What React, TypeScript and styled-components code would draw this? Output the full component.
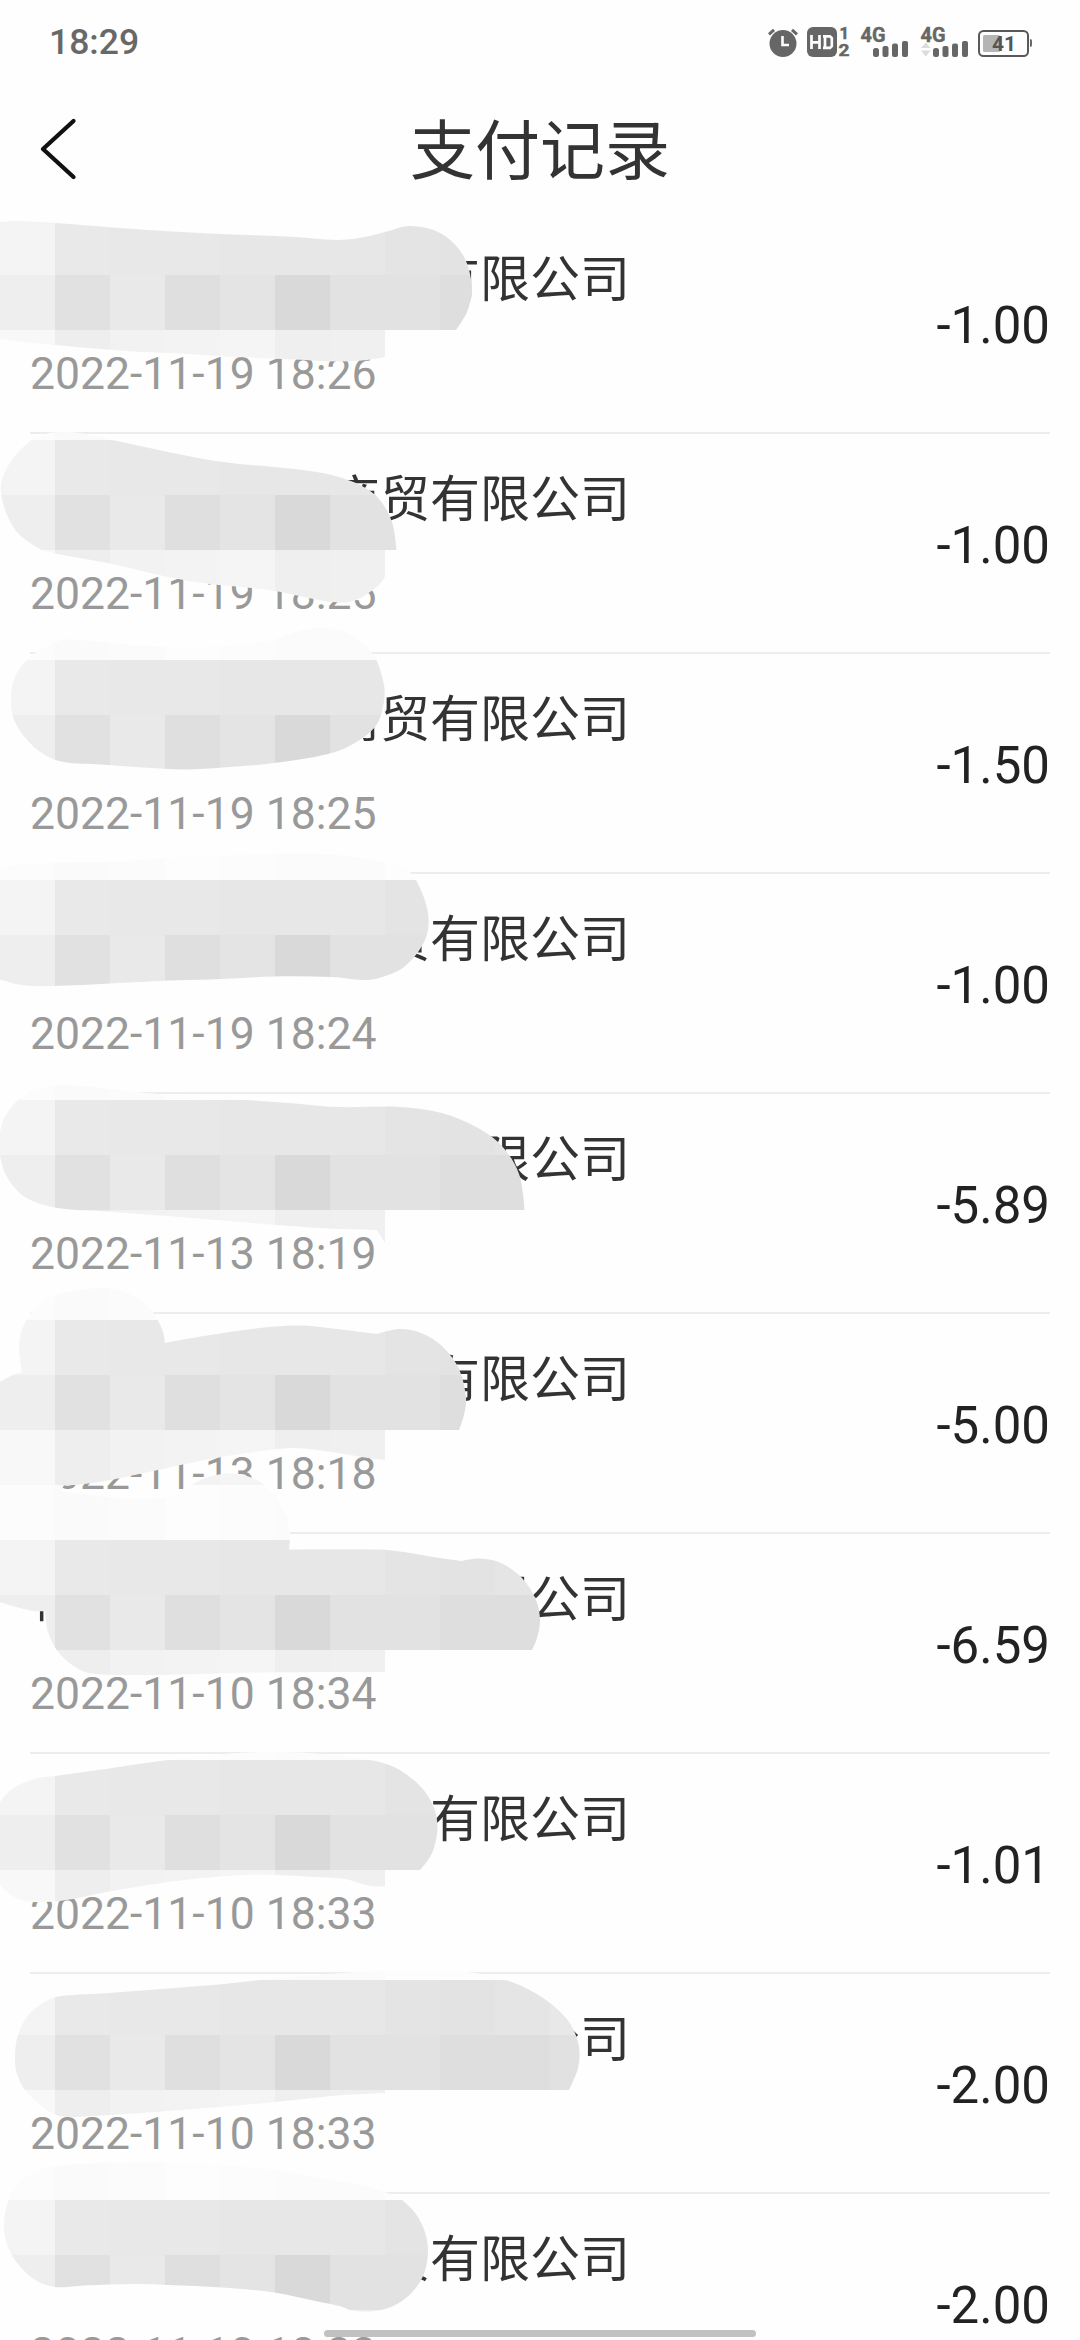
import React from 'react';
import styled, { createGlobalStyle } from 'styled-components';

const GlobalStyle = createGlobalStyle`
  html, body {
    margin: 0;
    padding: 0;
    background: #fefefe;
  }
  *, *::before, *::after { box-sizing: border-box; }
`;

const Screen = styled.div`
  position: relative;
  width: 1080px;
  height: 2340px;
  overflow: hidden;
  background: #fefefe;
  font-family: Roboto, 'Noto Sans CJK SC', sans-serif;
`;

const StatusBar = styled.header`
  display: flex;
  justify-content: space-between;
  height: 84px;
  padding: 0 46px 0 49px;
`;

const Clock = styled.span`
  font-size: 35.5px;
  font-weight: 500;
  line-height: 84px;
  color: #686868;
`;

const StatusIcons = styled.svg`
  width: 270px;
  height: 84px;
  font-family: Roboto, sans-serif;
`;

const TitleBar = styled.div`
  display: grid;
  grid-template-columns: 110px 1fr 110px;
  align-items: center;
  height: 130px;
`;

const BackButton = styled.button`
  display: flex;
  align-items: center;
  height: 130px;
  padding: 0 0 0 38px;
  border: 0;
  background: none;
`;

const Title = styled.h1`
  margin: 0;
  padding-bottom: 7px;
  font-family: 'Noto Sans CJK SC', sans-serif;
  font-size: 65px;
  font-weight: 400;
  line-height: 90px;
  text-align: center;
  color: #333;
`;

const List = styled.ul`
  margin: 0;
  padding: 0 30px;
  list-style: none;
`;

const Row = styled.li`
  display: flex;
  align-items: center;
  justify-content: space-between;
  height: 220px;
  border-bottom: 2px solid #ededed;
`;

const Details = styled.div`
  display: flex;
  flex-direction: column;
  gap: 42px;
  height: 218px;
  padding-top: 31px;
`;

const Company = styled.span`
  font-family: 'Noto Sans CJK SC', sans-serif;
  font-size: 50px;
  line-height: 60px;
  white-space: pre;
  color: #333;
`;

const Time = styled.time`
  font-size: 44.5px;
  line-height: 54px;
  color: #999;
`;

const Amount = styled.span`
  padding-top: 5px;
  font-size: 51px;
  line-height: 60px;
  color: #222;
`;

const SmearLayer = styled.svg`
  position: absolute;
  top: 0;
  left: 0;
  width: 605px;
  height: 2340px;
  pointer-events: none;
`;

const HomeIndicator = styled.div`
  position: absolute;
  left: 324px;
  bottom: 3px;
  width: 432px;
  height: 7px;
  border-radius: 4px;
  background: #c1c1c1;
`;

interface Payment {
  company: string;
  time: string;
  amount: string;
}

const NAME_LENGTH = 12;
const WIDE_SPACE = '\u3000';

const payments: Payment[] = [
  { company: '有限公司', time: '2022-11-19 18:26', amount: '-1.00' },
  { company: '商贸有限公司', time: '2022-11-19 18:25', amount: '-1.00' },
  { company: '商贸有限公司', time: '2022-11-19 18:25', amount: '-1.50' },
  { company: '贸有限公司', time: '2022-11-19 18:24', amount: '-1.00' },
  { company: '限公司', time: '2022-11-13 18:19', amount: '-5.89' },
  { company: '有限公司', time: '2022-11-13 18:18', amount: '-5.00' },
  { company: '杭' + WIDE_SPACE.repeat(8) + '限公司', time: '2022-11-10 18:34', amount: '-6.59' },
  { company: '有限公司', time: '2022-11-10 18:33', amount: '-1.01' },
  { company: '公司', time: '2022-11-10 18:33', amount: '-2.00' },
  { company: '贸有限公司', time: '2022-11-10 18:33', amount: '-2.00' },
];

/* Mosaic tile colours: four 55px bands that repeat every 220px. */
const CELL = 55;
const bands: string[][] = [
  ['#f4f4f4', '#e9e9e9', '#e8e8e8', '#e8e8e8', '#e7e7e7', '#e7e7e7', '#e7e7e7', '#e4e4e4', '#e3e3e3', '#e5e5e5', '#e8e8e8'],
  ['#eeeeee', '#e1e1e1', '#e9e9e9', '#dfdfdf', '#e4e4e4', '#d9d9d9', '#e2e2e2', '#e2e2e2', '#dedede', '#dedede', '#e1e1e1'],
  ['#f8f8f8', '#eeeeee', '#f2f2f2', '#f3f3f3', '#f5f5f5', '#efefef', '#f0f0f0', '#fefefe', '#fefefe', '#fefefe', '#fefefe'],
  ['#fcfcfc', '#fafafa', '#fbfbfb', '#fdfdfd', '#fcfcfc', '#fbfbfb', '#fbfbfb', '#fdfdfd', '#fdfdfd', '#fdfdfd', '#fdfdfd'],
];

/* [x, y] is a smooth point of the outline, [x, y, 1] a sharp corner. */
type Point = [number, number, number?];

const smears: Point[][] = [
  [[-10, 225], [0, 222], [20, 221], [63, 223.5], [126, 228.5], [210, 233.5], [295, 237], [337, 240], [362, 237.5], [387, 231.5], [410, 226], [440, 233], [463, 255], [472, 288], [467, 312], [456, 330, 1], [385, 330, 1], [385, 357, 1], [362, 360.5], [337, 361.5], [295, 359.5], [219, 356], [189, 354], [126, 351], [55, 345], [0, 339], [-10, 335]],
  [[1, 492], [8, 466], [31, 440], [45, 434], [63, 432], [80, 433], [110, 439.5], [168, 452], [223, 462], [295, 469], [332, 475], [362, 486], [379, 499], [392, 522], [396.5, 550, 1], [385, 550, 1], [385, 576], [370, 592], [351, 601.5], [332, 602], [311, 598.5], [269, 590], [210, 584], [168, 577], [110, 563.5], [55, 553.5], [38, 548], [14, 528]],
  [[11, 700], [15, 677], [29, 658], [55, 642], [72, 639.5], [109, 643], [168, 647], [219, 646], [269, 641], [303, 630], [324, 628], [345, 632], [372, 653], [384, 685], [383, 707], [375, 727], [353, 744], [328, 754], [274, 763], [223, 767.5], [185, 769.5], [135, 767], [101, 764.5], [59, 761], [34, 747], [15, 722]],
  [[-10, 870], [0, 868], [25, 864], [105, 862], [210, 856], [295, 854], [337, 855], [379, 861], [404, 868], [416, 880], [428, 913], [425, 940], [404, 967], [379, 978], [362, 980], [332, 977], [274, 976.5], [210, 979.5], [168, 980.5], [109, 983.5], [67, 985.5], [25, 985.5], [0, 979.5], [-10, 975]],
  [[0, 1133], [6, 1115], [21, 1098], [46, 1087], [67, 1085], [147, 1093], [246, 1100], [295, 1103.5], [337, 1107], [400, 1107], [442, 1113], [476, 1127], [501, 1145], [519, 1174], [524.5, 1210, 1], [385, 1210, 1], [385, 1243, 1], [377, 1230, 1], [337, 1229], [311, 1227.5], [252, 1223], [168, 1216], [105, 1211.5], [55, 1207.5], [25, 1197], [7, 1177], [0, 1155]],
  [[-10, 1390], [0, 1382], [13, 1375, 1], [22, 1372, 1], [19, 1347], [23, 1327], [34, 1309], [50, 1297], [80, 1290], [109, 1288], [130, 1294], [151, 1310], [162, 1329], [165, 1343, 1], [210, 1335], [269, 1327], [303, 1325.5], [337, 1329], [377, 1334, 1], [400, 1329], [421, 1333], [442, 1346], [459, 1369], [466, 1398], [464, 1415], [459, 1430, 1], [385, 1430, 1], [385, 1460, 1], [362, 1457], [332, 1452], [295, 1448], [269, 1450], [210, 1459], [139, 1474], [105, 1481], [80, 1484.5], [64, 1485.5, 1], [-10, 1485, 1]],
  [[-10, 1485, 1], [64, 1485, 1], [61, 1491, 1], [105, 1497], [143, 1499], [168, 1496], [191, 1485], [210, 1476.5], [231, 1473.5], [257, 1480], [274, 1495], [286, 1516], [290, 1534], [289, 1549.5, 1], [379, 1549.5], [404, 1552], [433, 1557], [461, 1561, 1], [480, 1558.5], [501, 1563], [522, 1578], [536, 1600], [540, 1620], [537, 1638], [532, 1650, 1], [385, 1650, 1], [385, 1672, 1], [252, 1672.5], [181, 1674.5], [101, 1674.5], [80, 1670], [59, 1653], [48, 1632], [45.5, 1611, 1], [33, 1611], [0, 1602], [-10, 1596]],
  [[-10, 1815], [0, 1802], [12, 1789], [34, 1779], [55, 1776], [109, 1768.5], [168, 1760], [231, 1753.5], [274, 1752], [316, 1753.5], [370, 1760], [396, 1768], [421, 1787], [434, 1808], [437.5, 1828], [434, 1848], [428, 1860], [420, 1870, 1], [385, 1870, 1], [385, 1886.5, 1], [370, 1886], [345, 1879], [307, 1876.5], [261, 1874.5], [219, 1876.5], [168, 1882], [109, 1891.5], [63, 1900.5], [25, 1901], [5, 1890], [-10, 1870]],
  [[15, 2057], [18, 2035], [30, 2013], [53, 1998], [74, 1995], [109, 1993], [168, 1988.5], [219, 1984.5], [261, 1980], [328, 1974], [379, 1971], [429, 1970], [476, 1973], [509, 1981], [535, 1993], [556, 2008], [571, 2025], [579, 2047], [578, 2068], [569, 2090, 1], [385, 2090, 1], [385, 2093, 1], [337, 2095.5], [295, 2100], [219, 2107], [168, 2111], [109, 2115], [63, 2116.5], [44, 2108], [25, 2090], [17, 2074]],
  [[4, 2227], [9, 2199], [25, 2178], [51, 2167], [105, 2163], [156, 2162], [219, 2165], [274, 2170], [316, 2177], [362, 2185], [387, 2193], [402, 2200], [418, 2217], [427, 2240], [427, 2262], [420, 2282], [402, 2301], [379, 2310.5], [354, 2311], [341, 2306.5], [320, 2302], [274, 2292.5], [223, 2287.5], [168, 2285], [135, 2284], [84, 2285.5], [55, 2287], [35, 2280], [18, 2264], [8, 2247]],
];

/* Closed Catmull-Rom curve through the points, with straight handles at corners. */
function outline(points: Point[]): string {
  const n = points.length;
  const handle = (i: number, sign: number): [number, number] => {
    const [x, y, sharp] = points[i];
    if (sharp) return [x, y];
    const prev = points[(i + n - 1) % n];
    const next = points[(i + 1) % n];
    const dx = next[0] - prev[0];
    const dy = next[1] - prev[1];
    const total = Math.hypot(dx, dy) || 1;
    const near = sign > 0 ? next : prev;
    const reach = Math.hypot(near[0] - x, near[1] - y) / 3;
    return [x + (sign * dx * reach) / total, y + (sign * dy * reach) / total];
  };
  let d = `M${points[0][0]} ${points[0][1]}`;
  for (let i = 0; i < n; i++) {
    const j = (i + 1) % n;
    const a = handle(i, 1);
    const b = handle(j, -1);
    d += `C${a[0]} ${a[1]} ${b[0]} ${b[1]} ${points[j][0]} ${points[j][1]}`;
  }
  return d + 'Z';
}

function Smears() {
  return (
    <SmearLayer viewBox="0 0 605 2340" aria-hidden="true">
      <defs>
        <pattern id="mosaic" width={605} height={220} patternUnits="userSpaceOnUse">
          {bands.map((band, r) =>
            band.map((fill, c) => (
              <rect key={`${r}-${c}`} x={c * CELL} y={r * CELL} width={CELL} height={CELL} fill={fill} shapeRendering="crispEdges" />
            )),
          )}
        </pattern>
      </defs>
      {smears.map((points, i) => (
        <path key={i} d={outline(points)} fill="url(#mosaic)" />
      ))}
    </SmearLayer>
  );
}

function Signal({ x, idle }: { x: number; idle?: boolean }) {
  return (
    <g transform={`translate(${x} 0)`}>
      <text x="-0.5" y="41.5" fontSize="20" fontWeight="700" stroke="#666" strokeWidth="0.4" textLength="25" lengthAdjust="spacingAndGlyphs">4G</text>
      <rect x="12" y="48" width="6" height="9" rx="2.5" />
      <rect x="21.5" y="46" width="6" height="11" rx="2" />
      <rect x="31" y="43.5" width="6" height="13.5" rx="2" />
      <rect x="41" y="41" width="6" height="16" rx="2" />
      {idle && <path d="M0 48l4.800-5.500 4.800 5.500zM0 50.500h9.600l-4.800 6z" fill="#dcdcdc" />}
    </g>
  );
}

function Indicators() {
  return (
    <StatusIcons viewBox="764 0 270 84" fill="#666">
      <circle cx="783" cy="43.5" r="13.5" />
      <path d="M769 34.300l5-4.500M797 34.300l-5-4.500" stroke="#666" strokeWidth="3" />
      <path d="M782.500 36v9h6.500" fill="none" stroke="#fefefe" strokeWidth="2.600" />
      <rect x="807" y="27" width="30" height="30" rx="6" />
      <path d="M811.500 35v14M819.500 35v14M811.500 42.300h8M823 36.300h7l1.800 1.800v8l-1.800 1.800h-7M825 36v12" fill="none" stroke="#fefefe" strokeWidth="2.700" />
      <text x="839.5" y="39" fontSize="16.5" fontWeight="700" stroke="#666" strokeWidth="0.5">1</text>
      <text x="838.5" y="56" fontSize="17" fontWeight="700" stroke="#666" strokeWidth="0.5" textLength="11" lengthAdjust="spacingAndGlyphs">2</text>
      <Signal x={861} />
      <Signal x={921} idle />
      <rect x="979" y="31" width="49" height="25" rx="4.5" fill="#fefefe" stroke="#595959" strokeWidth="2" />
      <path d="M1030 39q2 0 2 2v4q0 2-2 2z" />
      <rect x="983" y="35" width="17" height="17" rx="1.5" fill="#b5b5b5" />
      <text x="992" y="51" fontSize="21" fontWeight="700" fill="#555">41</text>
    </StatusIcons>
  );
}

export default function App() {
  return (
    <Screen>
      <GlobalStyle />
      <StatusBar>
        <Clock>18:29</Clock>
        <Indicators />
      </StatusBar>
      <TitleBar>
        <BackButton aria-label="返回">
          <svg width="40" height="64" viewBox="0 0 40 64" fill="none" stroke="#111" strokeWidth="4.3" strokeLinecap="round" strokeLinejoin="round">
            <path d="M35.500 4L5 32l30.500 28" />
          </svg>
        </BackButton>
        <Title>支付记录</Title>
      </TitleBar>
      <List>
        {payments.map((payment, i) => (
          <Row key={i}>
            <Details>
              <Company>{payment.company.padStart(NAME_LENGTH, WIDE_SPACE)}</Company>
              <Time>{payment.time}</Time>
            </Details>
            <Amount>{payment.amount}</Amount>
          </Row>
        ))}
      </List>
      <Smears />
      <HomeIndicator />
    </Screen>
  );
}
